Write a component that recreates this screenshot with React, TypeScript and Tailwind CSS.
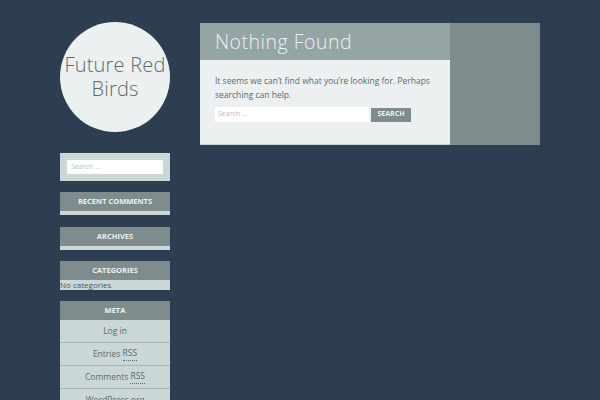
import React from "react";

const font = { fontFamily: '"Open Sans", "DejaVu Sans", sans-serif' };

function WidgetHead({ children }: { children: React.ReactNode }) {
  return (
    <div className="h-[19px] bg-[#7f8c8d] flex items-center justify-center text-[7.5px] font-bold text-[#ecf0f1] uppercase">
      {children}
    </div>
  );
}

export default function App() {
  return (
    <div className="w-[600px] h-[400px] bg-[#2c3e50] overflow-hidden flex" style={font}>
      <div className="ml-[60px] w-[110px] shrink-0 pt-[22px] flex flex-col">
        <div className="w-[110px] h-[110px] shrink-0 rounded-full bg-[#ecf0f1] flex items-center justify-center text-center text-[#5b6b6e] text-[20px] leading-[24px] font-light tracking-[0.2px]">
          Future Red
          <br />
          Birds
        </div>
        <div className="mt-[21px] h-[28px] shrink-0 bg-[#cbd6d6] flex items-center px-[7px]">
          <div className="h-[14px] w-full bg-white text-[7px] text-[#b6bcbf] flex items-center px-[4px]">Search …</div>
        </div>
        <div className="mt-[11px] shrink-0">
          <WidgetHead>Recent Comments</WidgetHead>
          <div className="h-[4px] bg-[#cbd6d6]" />
        </div>
        <div className="mt-[12px] shrink-0">
          <WidgetHead>Archives</WidgetHead>
          <div className="h-[4px] bg-[#cbd6d6]" />
        </div>
        <div className="mt-[11px] shrink-0">
          <WidgetHead>Categories</WidgetHead>
          <div className="h-[10px] bg-[#cbd6d6] text-[8px] leading-[10px] text-[#4a5a5c]">No categories</div>
        </div>
        <div className="mt-[11px] shrink-0">
          <WidgetHead>Meta</WidgetHead>
          <div className="bg-[#cbd6d6] text-[8.5px] text-[#5b6b6e]">
            <div className="h-[23px] flex items-center justify-center border-b border-[#a9b6b6]">Log in</div>
            <div className="h-[23px] flex items-center justify-center border-b border-[#a9b6b6]">
              Entries&nbsp;<span className="border-b border-dotted border-[#5b6b6e]">RSS</span>
            </div>
            <div className="h-[23px] flex items-center justify-center border-b border-[#a9b6b6]">
              Comments&nbsp;<span className="border-b border-dotted border-[#5b6b6e]">RSS</span>
            </div>
            <div className="h-[23px] flex items-center justify-center">WordPress.org</div>
          </div>
        </div>
      </div>
      <div className="ml-[30px] mt-[23px] w-[340px] h-[122px] shrink-0 flex">
        <div className="w-[250px] flex flex-col">
          <div className="h-[37px] bg-[#95a5a6] flex items-center px-[15px] text-[19.5px] font-light tracking-[0.5px] text-[#ecf0f1]">
            Nothing Found
          </div>
          <div className="flex-1 bg-[#ecf0f1] border-b border-[#c9d2d3] px-[15px] pt-[14px]">
            <p className="text-[8.5px] leading-[14px] text-[#5b6b6e]">
              It seems we can’t find what you’re looking for. Perhaps searching can help.
            </p>
            <div className="mt-[5px] flex items-center gap-[2px]">
              <div className="w-[154px] h-[15px] bg-white text-[7px] text-[#b6bcbf] flex items-center px-[3px]">Search …</div>
              <div className="w-[40px] h-[14px] bg-[#7f8c8d] text-[7px] font-bold text-[#ecf0f1] flex items-center justify-center uppercase">
                Search
              </div>
            </div>
          </div>
        </div>
        <div className="w-[90px] bg-[#7f8c8d]" />
      </div>
    </div>
  );
}
